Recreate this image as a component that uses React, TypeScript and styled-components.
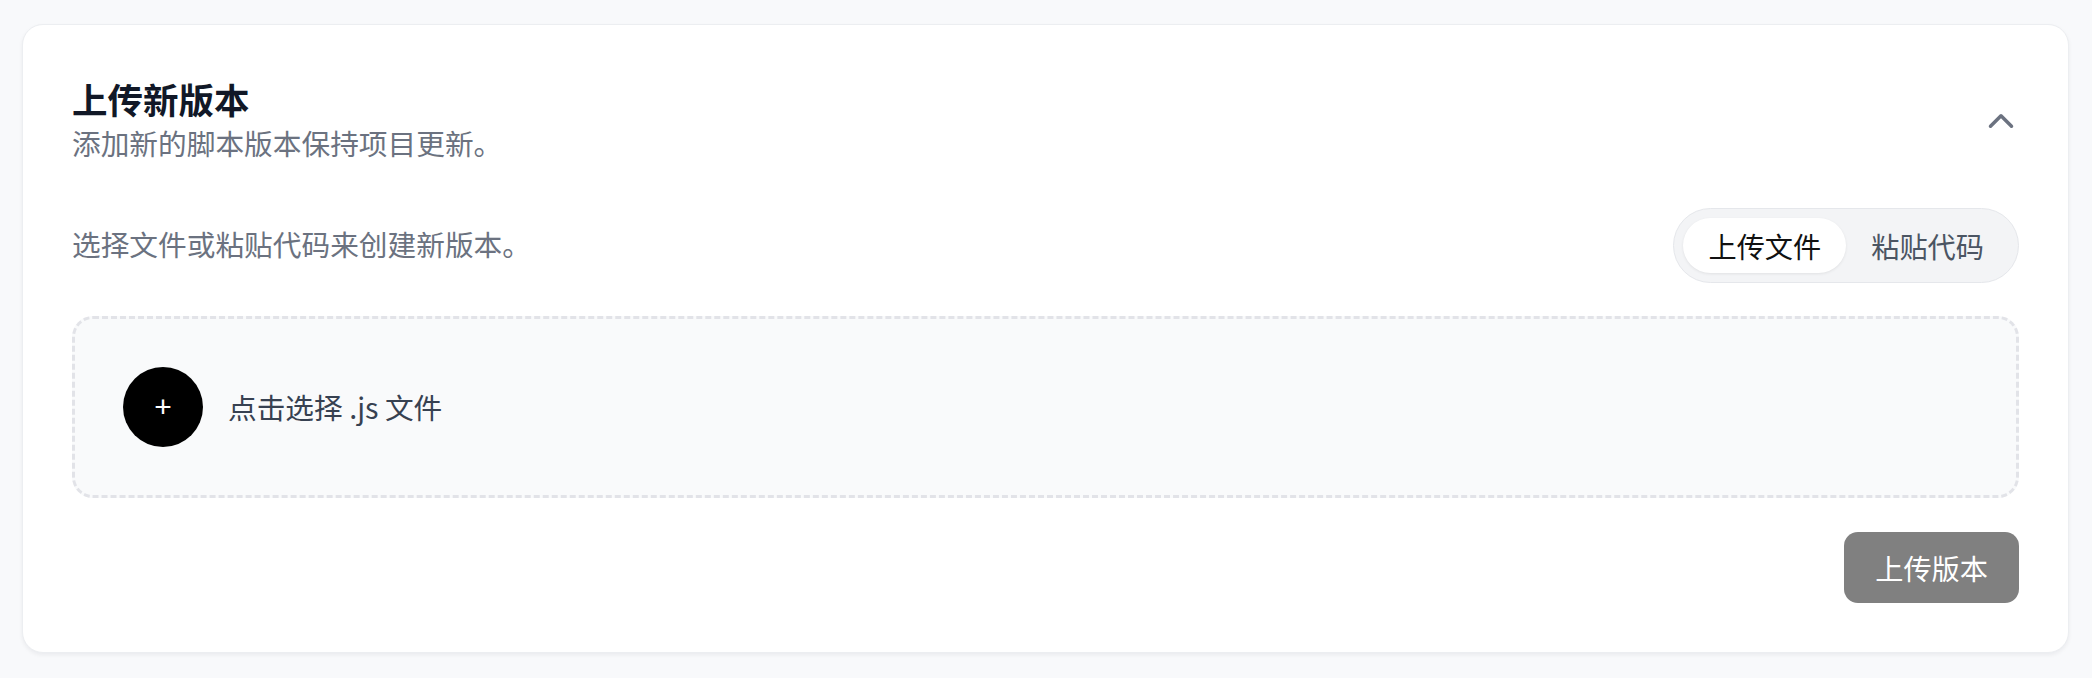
import React, { useState } from "react";
import styled, { createGlobalStyle } from "styled-components";
import { ChevronUp } from "lucide-react";

const GlobalStyle = createGlobalStyle`
  * { box-sizing: border-box; }
  body {
    margin: 0;
    background: #f8f9fb;
    font-family: "Noto Sans CJK SC", "Noto Sans", "Liberation Sans", sans-serif;
  }
`;

const Page = styled.div`
  padding: 24px 23px 24px 22px;
`;

const Card = styled.section`
  background: #ffffff;
  border: 1px solid #eceef1;
  border-radius: 21px;
  padding: 49px;
  box-shadow: 0 2px 4px rgba(17, 24, 39, 0.06);
`;

const Header = styled.header`
  display: flex;
  align-items: center;
  justify-content: space-between;
  margin-bottom: 41px;
`;

const TitleBlock = styled.div`
  display: flex;
  flex-direction: column;
`;

const Title = styled.h2`
  margin: 0;
  font-size: 35.5px;
  line-height: 49px;
  font-weight: 700;
  color: #111827;
`;

const Subtitle = styled.p`
  margin: 0;
  padding-bottom: 4px;
  font-size: 28.7px;
  line-height: 40px;
  color: #6b7280;
`;

const CollapseButton = styled.button`
  width: 42px;
  height: 42px;
  padding: 0;
  border: none;
  background: transparent;
  color: #6b7280;
  display: flex;
  align-items: center;
  justify-content: center;
  margin-right: -3px;
  cursor: pointer;
`;

const ModeRow = styled.div`
  display: flex;
  align-items: center;
  justify-content: space-between;
`;

const Hint = styled.p`
  margin: 0;
  padding-bottom: 4px;
  font-size: 28.7px;
  line-height: 42px;
  color: #6b7280;
`;

const Toggle = styled.div`
  display: inline-flex;
  padding: 9px;
  border: 1px solid #e5e7eb;
  background: #f3f4f6;
  border-radius: 999px;
`;

const ToggleButton = styled.button<{ $active: boolean }>`
  height: 55px;
  padding: 0 25px;
  border: none;
  border-radius: 999px;
  font-family: inherit;
  font-size: 28.2px;
  line-height: 55px;
  cursor: pointer;
  background: ${(p) => (p.$active ? "#ffffff" : "transparent")};
  color: ${(p) => (p.$active ? "#111111" : "#4b5563")};
  box-shadow: ${(p) => (p.$active ? "0 1px 3px rgba(0,0,0,0.08)" : "none")};
`;

const DropZone = styled.div`
  margin-top: 33px;
  height: 182px;
  border: 3px dashed #e2e3e8;
  border-radius: 21px;
  background: #f9fafb;
  display: flex;
  align-items: center;
  gap: 25px;
  padding: 0 48px;
  cursor: pointer;
`;

const AddCircle = styled.span`
  width: 80px;
  height: 80px;
  border-radius: 50%;
  background: #000000;
  color: #ffffff;
  display: flex;
  align-items: center;
  justify-content: center;
  font-size: 30px;
  line-height: 1;
  font-family: "Liberation Sans", sans-serif;
`;

const DropText = styled.span`
  font-size: 28.7px;
  line-height: 42px;
  color: #374151;
`;

const Footer = styled.div`
  display: flex;
  justify-content: flex-end;
  margin-top: 34px;
`;

const UploadButton = styled.button`
  height: 71px;
  padding: 0 31px;
  border: none;
  border-radius: 14px;
  background: #808080;
  color: #ffffff;
  font-family: inherit;
  font-size: 28.2px;
  cursor: not-allowed;
`;

export default function App() {
  const [mode, setMode] = useState<"file" | "paste">("file");
  return (
    <>
      <GlobalStyle />
      <Page>
        <Card>
          <Header>
            <TitleBlock>
              <Title>上传新版本</Title>
              <Subtitle>添加新的脚本版本保持项目更新。</Subtitle>
            </TitleBlock>
            <CollapseButton aria-label="收起">
              <ChevronUp size={42} strokeWidth={2} />
            </CollapseButton>
          </Header>
          <ModeRow>
            <Hint>选择文件或粘贴代码来创建新版本。</Hint>
            <Toggle>
              <ToggleButton $active={mode === "file"} onClick={() => setMode("file")}>
                上传文件
              </ToggleButton>
              <ToggleButton $active={mode === "paste"} onClick={() => setMode("paste")}>
                粘贴代码
              </ToggleButton>
            </Toggle>
          </ModeRow>
          <DropZone>
            <AddCircle>+</AddCircle>
            <DropText>点击选择 .js 文件</DropText>
          </DropZone>
          <Footer>
            <UploadButton disabled>上传版本</UploadButton>
          </Footer>
        </Card>
      </Page>
    </>
  );
}
